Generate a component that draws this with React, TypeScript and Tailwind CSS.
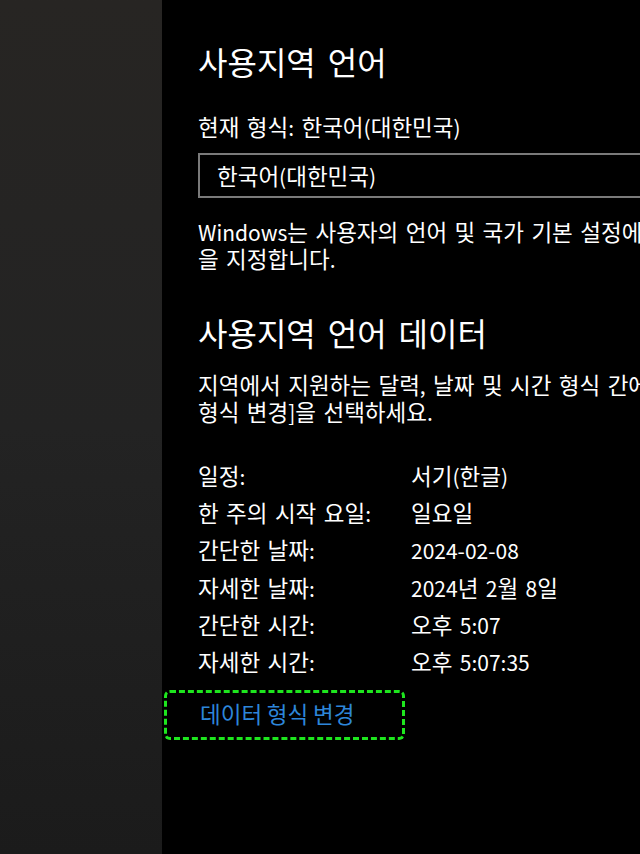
const rows: [string, string][] = [
  ['일정:', '서기(한글)'],
  ['한 주의 시작 요일:', '일요일'],
  ['간단한 날짜:', '2024-02-08'],
  ['자세한 날짜:', '2024년 2월 8일'],
  ['간단한 시간:', '오후 5:07'],
  ['자세한 시간:', '오후 5:07:35'],
];

// Hangul in the Windows UI font runs a bit larger than its Latin glyphs
function K({ t }: { t: string }) {
  return (
    <span>
      {t.split(/([가-힣]+)/).map((part, i) =>
        /[가-힣]/.test(part) ? (
          <span key={i} className="text-[22.5px] leading-[16px]">
            {part}
          </span>
        ) : (
          part
        ),
      )}
    </span>
  );
}

export default function App() {
  return (
    <div className="flex h-[854px] w-[640px] overflow-hidden bg-black font-['Noto_Sans_CJK_KR','Noto_Sans',sans-serif] text-white">
      {/* blurred desktop behind the settings window */}
      <div className="h-full w-[162px] shrink-0 bg-gradient-to-b from-[#272523] via-[#232323] to-[#1b1b1b]" />

      <div className="w-[900px] shrink-0 pl-[36px] pt-[41px] text-[21px] [word-spacing:2.7px]">
        <h1 className="text-[32px] leading-[40px] [word-spacing:4.8px]">사용지역 언어</h1>

        <p className="mt-[32px] leading-[28px]">
          <K t="현재 형식: 한국어(대한민국)" />
        </p>

        <div className="mt-[12px] flex h-[45px] items-center border-2 border-[#7a7a7a] pl-[17px] leading-[28px]">
          <K t="한국어(대한민국)" />
        </div>

        <p className="mt-[21px] whitespace-nowrap leading-[27px]">
          <K t="Windows는 사용자의 언어 및 국가 기본 설정에 따라 날짜 및 시간 형식" />
          <br />
          <K t="을 지정합니다." />
        </p>

        <h2 className="mt-[39px] text-[32px] leading-[40px] [word-spacing:4.8px]">사용지역 언어 데이터</h2>

        <p className="mt-[19.5px] whitespace-nowrap leading-[27px]">
          <K t="지역에서 지원하는 달력, 날짜 및 시간 형식 간에 전환하려면 [데이터" />
          <br />
          <K t="형식 변경]을 선택하세요." />
        </p>

        <dl className="mt-[32.5px] grid grid-cols-[212px_1fr] leading-[37.2px]">
          {rows.map(([label, value]) => (
            <div key={label} className="contents">
              <dt>
                <K t={label} />
              </dt>
              <dd className="pl-px">
                <K t={value} />
              </dd>
            </div>
          ))}
        </dl>

        <button className="-ml-[34px] mt-[8.8px] flex h-[50px] w-[241px] items-center rounded-[6px] border-[3px] border-dashed border-[#1ee61e] pb-[2px] pl-[33px] leading-[28px] text-[#2d86d9]">
          <K t="데이터 형식 변경" />
        </button>
      </div>
    </div>
  );
}
